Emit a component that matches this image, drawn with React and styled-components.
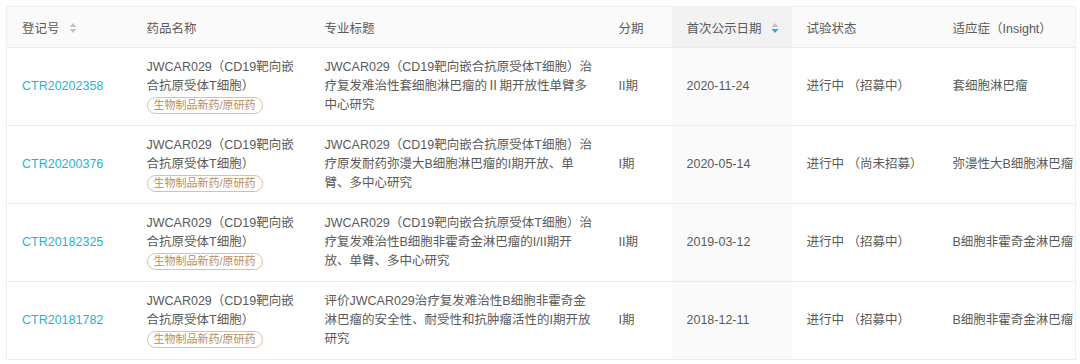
import React from "react";
import styled, { createGlobalStyle } from "styled-components";

const GlobalStyle = createGlobalStyle`
  body {
    margin: 0;
    background: #fff;
    font-family: "Liberation Sans", "Noto Sans CJK SC", sans-serif;
  }
`;

const cols = [125, 178, 294, 68, 120, 146, 138];

const rows = [
  {
    id: "CTR20202358",
    name: ["JWCAR029（CD19靶向嵌", "合抗原受体T细胞）"],
    title: ["JWCAR029（CD19靶向嵌合抗原受体T细胞）治", "疗复发难治性套细胞淋巴瘤的Ⅱ期开放性单臂多", "中心研究"],
    phase: "II期",
    date: "2020-11-24",
    status: "进行中 （招募中）",
    indication: "套细胞淋巴瘤",
  },
  {
    id: "CTR20200376",
    name: ["JWCAR029（CD19靶向嵌", "合抗原受体T细胞）"],
    title: ["JWCAR029（CD19靶向嵌合抗原受体T细胞）治", "疗原发耐药弥漫大B细胞淋巴瘤的I期开放、单", "臂、多中心研究"],
    phase: "I期",
    date: "2020-05-14",
    status: "进行中 （尚未招募）",
    indication: "弥漫性大B细胞淋巴瘤",
  },
  {
    id: "CTR20182325",
    name: ["JWCAR029（CD19靶向嵌", "合抗原受体T细胞）"],
    title: ["JWCAR029（CD19靶向嵌合抗原受体T细胞）治", "疗复发难治性B细胞非霍奇金淋巴瘤的I/II期开", "放、单臂、多中心研究"],
    phase: "II期",
    date: "2019-03-12",
    status: "进行中 （招募中）",
    indication: "B细胞非霍奇金淋巴瘤",
  },
  {
    id: "CTR20181782",
    name: ["JWCAR029（CD19靶向嵌", "合抗原受体T细胞）"],
    title: ["评价JWCAR029治疗复发难治性B细胞非霍奇金", "淋巴瘤的安全性、耐受性和抗肿瘤活性的I期开放", "研究"],
    phase: "I期",
    date: "2018-12-11",
    status: "进行中 （招募中）",
    indication: "B细胞非霍奇金淋巴瘤",
  },
];

function SortIcon({ active }) {
  return (
    <SortSvg width="8" height="12" viewBox="0 0 8 12">
      <path d="M4 1 L7.5 5 H0.5 Z" fill="#c4c4c4" />
      <path d="M4 11 L7.5 7 H0.5 Z" fill={active ? "#1fb2cf" : "#c4c4c4"} />
    </SortSvg>
  );
}

export default function App() {
  return (
    <Page>
      <GlobalStyle />
      <Table>
        <colgroup>
          {cols.map((w, i) => (
            <col key={i} style={{ width: w }} />
          ))}
        </colgroup>
        <thead>
          <tr>
            <Th>
              登记号
              <SortIcon />
            </Th>
            <Th>药品名称</Th>
            <Th>专业标题</Th>
            <Th>分期</Th>
            <Th sorted>
              首次公示日期
              <SortIcon active />
            </Th>
            <Th>试验状态</Th>
            <Th>适应症（Insight）</Th>
          </tr>
        </thead>
        <tbody>
          {rows.map((r) => (
            <Row key={r.id}>
              <Td>
                <IdLink>{r.id}</IdLink>
              </Td>
              <Td>
                {r.name.map((l, i) => (
                  <Line key={i}>{l}</Line>
                ))}
                <Tag>生物制品新药/原研药</Tag>
              </Td>
              <Td>
                {r.title.map((l, i) => (
                  <Line key={i}>{l}</Line>
                ))}
              </Td>
              <Td>{r.phase}</Td>
              <Td sorted>{r.date}</Td>
              <Td>{r.status}</Td>
              <Td>{r.indication}</Td>
            </Row>
          ))}
        </tbody>
      </Table>
    </Page>
  );
}

const Page = styled.div`
  padding: 6px 5px 0 6px;
`;

const Table = styled.table`
  width: 1069px;
  table-layout: fixed;
  border-collapse: collapse;
  border: 1px solid #efefef;
  color: #5a5a5a;
  font-size: 12.5px;
`;

const Th = styled.th`
  height: 40px;
  padding: 0 15px;
  text-align: left;
  font-weight: normal;
  white-space: nowrap;
  background: ${(p) => (p.sorted ? "#f2f2f2" : "#fafafa")};
  border-bottom: 1px solid #ececec;
`;

const SortSvg = styled.svg`
  margin-left: 9px;
  vertical-align: -1px;
`;

const Row = styled.tr`
  height: 78px;
  border-bottom: 1px solid #ececec;
`;

const Td = styled.td`
  padding: 0 15px;
  vertical-align: middle;
  line-height: 19px;
  white-space: nowrap;
  overflow: hidden;
  background: ${(p) => (p.sorted ? "#fafafa" : "#fff")};
`;

const Line = styled.div``;

const IdLink = styled.span`
  color: #27b3cf;
`;

const Tag = styled.span`
  display: inline-block;
  margin-top: 1px;
  padding: 0 6px;
  height: 15px;
  line-height: 15px;
  border: 1px solid #dcbf9c;
  border-radius: 9px;
  color: #b88e5c;
  font-size: 11px;
`;
